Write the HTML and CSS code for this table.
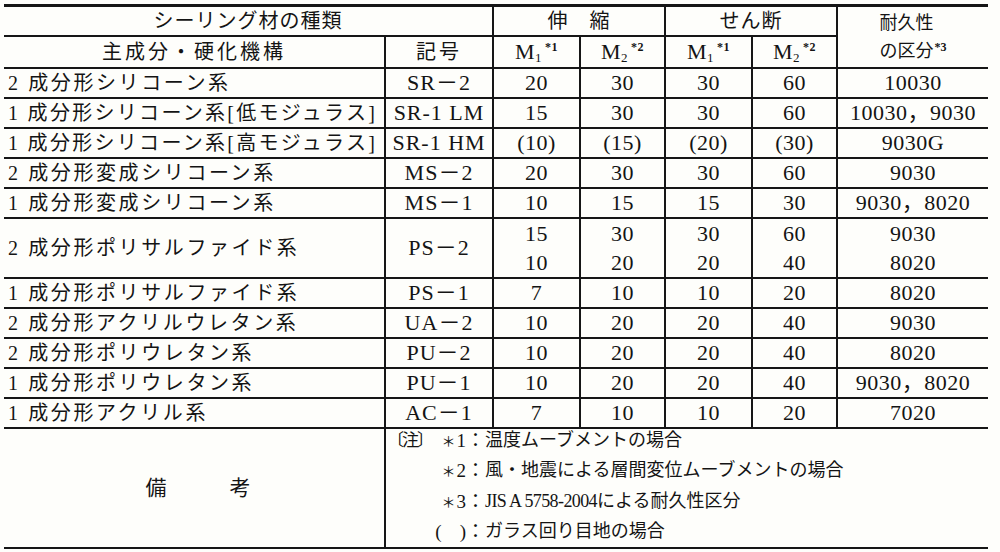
FILE: index.html
```html
<!DOCTYPE html>
<html lang="ja">
<head>
<meta charset="utf-8">
<title>シーリング材の種類</title>
<link rel="stylesheet" href="styles.css">
</head>
<body>
<table class="sheet">
  <colgroup>
    <col class="c-name"><col class="c-code"><col class="c-num"><col class="c-num2"><col class="c-num"><col class="c-num2"><col class="c-dur">
  </colgroup>
  <tr class="h1">
    <th colspan="2" class="jp">シーリング材の種類</th>
    <th colspan="2" class="jp">伸　縮</th>
    <th colspan="2" class="jp">せん断</th>
    <th rowspan="2" class="jp dur-head"><span class="dur-block">耐久性<br>の区分<sup class="star">*3</sup></span></th>
  </tr>
  <tr class="h2">
    <th class="jp">主成分・硬化機構</th>
    <th class="jp">記号</th>
    <th class="num">M<sub>1</sub><sup class="star">*1</sup></th>
    <th class="num">M<sub>2</sub><sup class="star">*2</sup></th>
    <th class="num">M<sub>1</sub><sup class="star">*1</sup></th>
    <th class="num">M<sub>2</sub><sup class="star">*2</sup></th>
  </tr>
  <tr class="r">
    <td class="name">2 成分形シリコーン系</td><td class="code">SR－2</td>
    <td class="num">20</td><td class="num">30</td><td class="num">30</td><td class="num">60</td><td class="num">10030</td>
  </tr>
  <tr class="r">
    <td class="name tight">1 成分形シリコーン系[低モジュラス]</td><td class="code">SR-1 LM</td>
    <td class="num">15</td><td class="num">30</td><td class="num">30</td><td class="num">60</td><td class="num">10030，9030</td>
  </tr>
  <tr class="r">
    <td class="name tight">1 成分形シリコーン系[高モジュラス]</td><td class="code">SR-1 HM</td>
    <td class="num">(10)</td><td class="num">(15)</td><td class="num">(20)</td><td class="num">(30)</td><td class="num">9030G</td>
  </tr>
  <tr class="r">
    <td class="name">2 成分形変成シリコーン系</td><td class="code">MS－2</td>
    <td class="num">20</td><td class="num">30</td><td class="num">30</td><td class="num">60</td><td class="num">9030</td>
  </tr>
  <tr class="r">
    <td class="name">1 成分形変成シリコーン系</td><td class="code">MS－1</td>
    <td class="num">10</td><td class="num">15</td><td class="num">15</td><td class="num">30</td><td class="num">9030，8020</td>
  </tr>
  <tr class="r2">
    <td class="name">2 成分形ポリサルファイド系</td><td class="code">PS－2</td>
    <td class="num dbl">15<br>10</td><td class="num dbl">30<br>20</td><td class="num dbl">30<br>20</td><td class="num dbl">60<br>40</td><td class="num dbl">9030<br>8020</td>
  </tr>
  <tr class="r">
    <td class="name">1 成分形ポリサルファイド系</td><td class="code">PS－1</td>
    <td class="num">7</td><td class="num">10</td><td class="num">10</td><td class="num">20</td><td class="num">8020</td>
  </tr>
  <tr class="r">
    <td class="name">2 成分形アクリルウレタン系</td><td class="code">UA－2</td>
    <td class="num">10</td><td class="num">20</td><td class="num">20</td><td class="num">40</td><td class="num">9030</td>
  </tr>
  <tr class="r">
    <td class="name">2 成分形ポリウレタン系</td><td class="code">PU－2</td>
    <td class="num">10</td><td class="num">20</td><td class="num">20</td><td class="num">40</td><td class="num">8020</td>
  </tr>
  <tr class="r">
    <td class="name">1 成分形ポリウレタン系</td><td class="code">PU－1</td>
    <td class="num">10</td><td class="num">20</td><td class="num">20</td><td class="num">40</td><td class="num">9030，8020</td>
  </tr>
  <tr class="r">
    <td class="name">1 成分形アクリル系</td><td class="code">AC－1</td>
    <td class="num">7</td><td class="num">10</td><td class="num">10</td><td class="num">20</td><td class="num">7020</td>
  </tr>
  <tr class="rem">
    <td class="remark jp">備　　　考</td>
    <td colspan="6" class="notes">
      <div class="note-grid">
        <span class="tag">〔注〕</span><span class="lab"><span class="ast">＊</span>1：</span><span class="txt">温度ムーブメントの場合</span>
        <span class="tag"></span><span class="lab"><span class="ast">＊</span>2：</span><span class="txt">風・地震による層間変位ムーブメントの場合</span>
        <span class="tag"></span><span class="lab"><span class="ast">＊</span>3：</span><span class="txt"><span class="lat">JIS A 5758-2004</span>による耐久性区分</span>
        <span class="tag"></span><span class="lab paren">(<span class="gap"></span>)：</span><span class="txt">ガラス回り目地の場合</span>
      </div>
    </td>
  </tr>
</table>
</body>
</html>
```

FILE: styles.css
```css
html, body {
  margin: 0;
  padding: 0;
  background: #fefefb;
}
body {
  color: #141414;
  font-family: "Liberation Serif", "Noto Sans CJK JP", serif;
}
.sheet {
  margin: 4px 0 0 4px;
  width: 984px;
  border-collapse: collapse;
  table-layout: fixed;
}
.c-name { width: 381px; }
.c-code { width: 108px; }
.c-num { width: 87px; }
.c-num2 { width: 85px; }
.c-dur { width: 151px; }

.sheet th, .sheet td {
  padding: 0;
  border: 2px solid #161616;
  font-weight: 400;
  text-align: center;
  vertical-align: middle;
  white-space: nowrap;
  line-height: 24px;
}
.sheet tr > :first-child { border-left: none; }
.sheet tr > :last-child { border-right: none; }
.sheet tr.h1 th { border-top-width: 3px; }
.sheet .dur-head { border-right: none; }

.h1 { height: 30px; }
.h2 { height: 32px; }
.r { height: 30px; }
.r2 { height: 60px; }
.rem { height: 119px; }

.jp {
  font-size: 20px;
  letter-spacing: 1px;
}
.h2 .jp { letter-spacing: 3px; }
.dur-head { font-size: 18px; letter-spacing: 0; line-height: 28px !important; }
.dur-block { display: inline-block; text-align: left; }

.num {
  font-size: 22px;
  letter-spacing: 0.5px;
}
.num.dbl { line-height: 29px; }
sub {
  font-size: 13px;
  vertical-align: -3px;
  line-height: 0;
}
.star {
  font-size: 12px;
  font-weight: 700;
  vertical-align: 8px;
  line-height: 0;
  margin-left: 3px;
}
.dur-head .star { margin-left: 1px; vertical-align: 6px; }

.name {
  text-align: left !important;
  padding-left: 4px !important;
  font-size: 20px;
  letter-spacing: 2.6px;
}
.name.tight { letter-spacing: 2.3px; }
.code {
  font-size: 22px;
  letter-spacing: 1px;
}

.remark {
  font-size: 21px;
  letter-spacing: 0;
  padding-left: 8px !important;
}
.notes {
  text-align: left !important;
  vertical-align: top !important;
  font-size: 18px;
}
.note-grid {
  display: grid;
  grid-template-columns: 40px 58px 1fr;
  line-height: 29.5px;
  margin-top: -3px;
  padding-left: 1px;
}
.tag { font-size: 17px; letter-spacing: -2px; }
.lab { text-align: right; font-size: 19px; white-space: nowrap; }
.ast { font-size: 14px; vertical-align: 1px; margin-right: 1px; }
.paren { letter-spacing: 0; }
.gap { display: inline-block; width: 18px; }
.txt { letter-spacing: 0; }
.lat { letter-spacing: -0.6px; font-size: 18px; }
```
